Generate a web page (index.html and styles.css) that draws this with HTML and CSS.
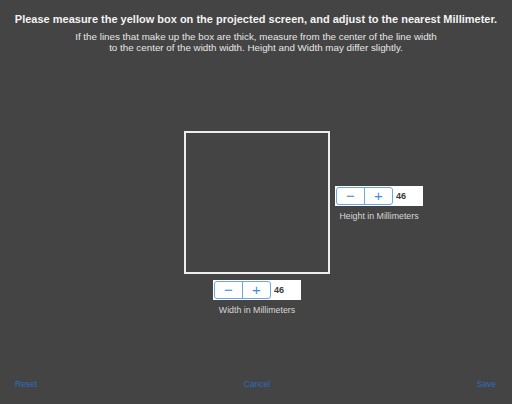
FILE: index.html
```html
<!DOCTYPE html>
<html lang="en">
<head>
  <meta charset="UTF-8">
  <meta name="viewport" content="width=device-width, initial-scale=1.0">
  <title>Calibrare</title>
  <link rel="stylesheet" href="styles.css">
</head>
<body>
  <div class="screen">
    <div class="header">
      <h1>Please measure the yellow box on the projected screen, and adjust to the nearest Millimeter.</h1>
      <p>If the lines that make up the box are thick, measure from the center of the line width<br>
        to the center of the width width. Height and Width may differ slightly.</p>
    </div>

    <div class="measure">
      <div class="box"></div>

      <div class="control height-control">
        <div class="field">
          <div class="stepper">
            <span class="step">&minus;</span>
            <span class="step">+</span>
          </div>
          <span class="value">46</span>
        </div>
        <div class="caption">Height in Millimeters</div>
      </div>

      <div class="control width-control">
        <div class="field">
          <div class="stepper">
            <span class="step">&minus;</span>
            <span class="step">+</span>
          </div>
          <span class="value">46</span>
        </div>
        <div class="caption">Width in Millimeters</div>
      </div>
    </div>

    <div class="footer">
      <span class="link">Reset</span>
      <span class="link">Cancel</span>
      <span class="link">Save</span>
    </div>
  </div>
</body>
</html>
```

FILE: styles.css
```css
body {
  margin: 0;
  background: #444444;
  font-family: 'Liberation Sans', Arial, sans-serif;
}

.screen {
  height: 404px;
  display: flex;
  flex-direction: column;
}

.header {
  text-align: center;
  padding-top: 13px;
}

.header h1 {
  margin: 0;
  font-size: 11px;
  line-height: 13px;
  font-weight: bold;
  color: #f2f2f2;
}

.header p {
  margin: 5px 0 0 0;
  font-size: 9.8px;
  line-height: 11px;
  color: #e6e6e6;
}

.measure {
  flex: 1;
  display: grid;
  grid-template-columns: 1fr 146px 1fr;
  grid-template-rows: 143px auto;
  align-content: start;
  padding-top: 78px;
  padding-left: 2px;
}

.box {
  grid-column: 2;
  grid-row: 1;
  border: 2px solid #ededed;
  box-sizing: border-box;
}

.control {
  display: flex;
  flex-direction: column;
  align-items: center;
}

.height-control {
  grid-column: 3;
  grid-row: 1;
  align-self: center;
  justify-self: start;
  margin-left: 5px;
  margin-top: 2px;
}

.width-control {
  grid-column: 2;
  grid-row: 2;
  margin-top: 6px;
}

.field {
  width: 88px;
  height: 20px;
  background: #ffffff;
  display: flex;
  align-items: center;
  padding-left: 1px;
  box-sizing: border-box;
}

.stepper {
  display: flex;
  height: 18px;
  border: 1px solid #6aa6ea;
  border-radius: 3px;
  box-sizing: border-box;
}

.step {
  width: 27px;
  display: flex;
  align-items: center;
  justify-content: center;
  color: #3f8ae0;
  font-size: 15px;
  line-height: 16px;
}

.step + .step {
  border-left: 1px solid #6aa6ea;
}

.value {
  margin-left: 3px;
  font-size: 9px;
  font-weight: bold;
  color: #3a3a3a;
}

.caption {
  margin-top: 5px;
  font-size: 8.8px;
  color: #d6d6d6;
}

.footer {
  display: flex;
  justify-content: space-between;
  padding: 0 16px 15px 15px;
}

.link {
  font-size: 8.5px;
  color: #2e6cc0;
}
```
